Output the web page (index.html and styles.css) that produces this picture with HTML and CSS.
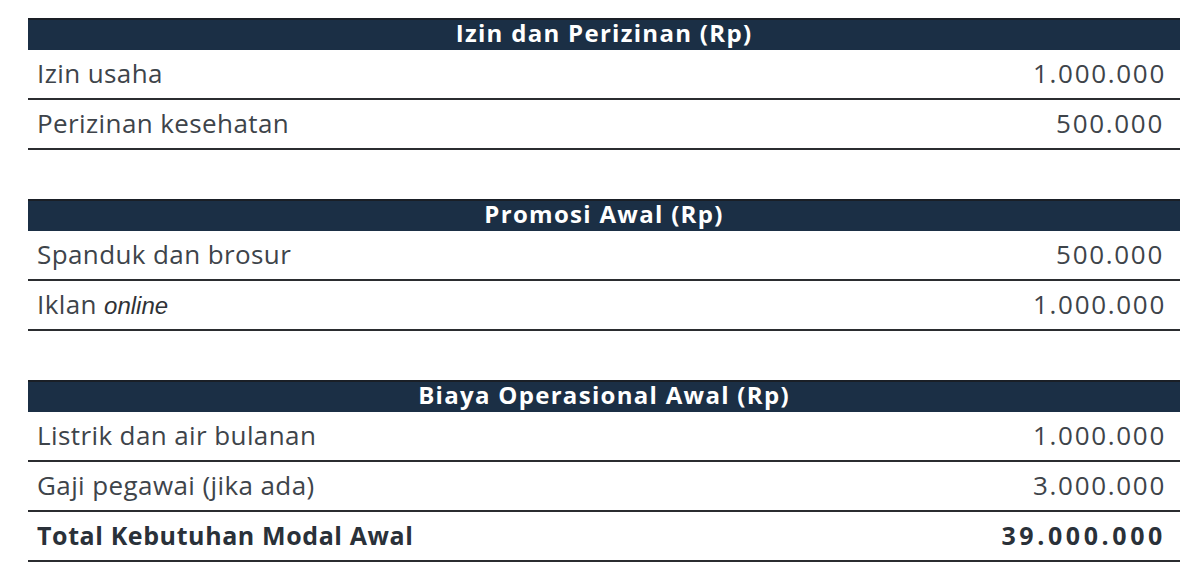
FILE: index.html
```html
<!DOCTYPE html>
<html>
<head>
<meta charset="utf-8">
<link rel="stylesheet" href="styles.css">
</head>
<body>
<div class="page">
  <div class="table">
    <div class="head">Izin dan Perizinan (Rp)</div>
    <div class="row"><span>Izin usaha</span><span class="num">1.000.000</span></div>
    <div class="row"><span>Perizinan kesehatan</span><span class="num num-in">500.000</span></div>
  </div>
  <div class="table">
    <div class="head">Promosi Awal (Rp)</div>
    <div class="row"><span>Spanduk dan brosur</span><span class="num num-in">500.000</span></div>
    <div class="row"><span>Iklan <em class="it">online</em></span><span class="num">1.000.000</span></div>
  </div>
  <div class="table">
    <div class="head">Biaya Operasional Awal (Rp)</div>
    <div class="row"><span>Listrik dan air bulanan</span><span class="num">1.000.000</span></div>
    <div class="row"><span>Gaji pegawai (jika ada)</span><span class="num">3.000.000</span></div>
    <div class="row total"><span>Total Kebutuhan Modal Awal</span><span class="num">39.000.000</span></div>
  </div>
</div>
</body>
</html>
```
FILE: styles.css
```css
html, body {
  margin: 0;
  padding: 0;
  background: #ffffff;
}
.page {
  padding: 18px 20px 0 28px;
  width: 1152px;
  display: flex;
  flex-direction: column;
  gap: 49px;
  font-family: "Open Sans", "Noto Sans", sans-serif;
}
.table {
  display: flex;
  flex-direction: column;
}
.head {
  height: 32px;
  box-sizing: border-box;
  background: #1b2f45;
  border-top: 2px solid #1a1f26;
  color: #ffffff;
  font-weight: 700;
  font-size: 24px;
  letter-spacing: 1.3px;
  line-height: 26px;
  text-align: center;
}
.row {
  height: 50px;
  box-sizing: border-box;
  border-bottom: 2px solid #2b2d30;
  display: flex;
  justify-content: space-between;
  align-items: center;
  padding: 0 14px 2px 9px;
  font-size: 26px;
  letter-spacing: 0.4px;
  color: #3e444a;
}
.num {
  letter-spacing: 1.7px;
}
.num-in {
  margin-right: 2px;
}
.it {
  font-family: "Liberation Sans", Arial, sans-serif;
  font-style: italic;
  font-size: 24px;
  letter-spacing: 0;
  color: #2f3236;
}
.total {
  font-weight: 700;
  font-size: 25px;
  color: #2a3139;
  letter-spacing: 0.6px;
}
.total .num {
  letter-spacing: 3.6px;
}
```
